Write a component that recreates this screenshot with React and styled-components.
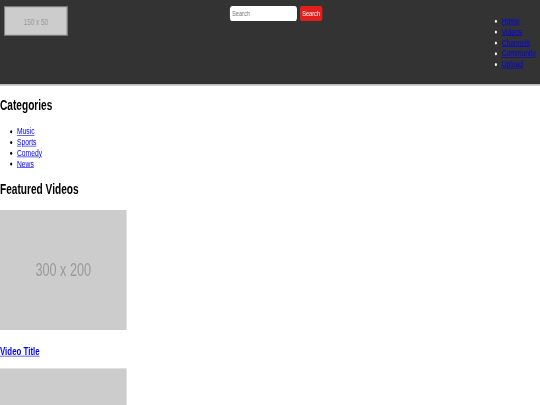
import React from "react";
import styled, { createGlobalStyle } from "styled-components";

const Global = createGlobalStyle`
  html, body { margin: 0; padding: 0; background: #fff; overflow: hidden; }
  body { font-family: "Liberation Sans", Arial, sans-serif; }
`;

/* The reference is a 1280x675 page photographed into 540x405,
   so the whole page is laid out at its natural size and scaled. */
const Page = styled.div`
  width: 1280px;
  transform-origin: 0 0;
  transform: scale(0.421875, 0.6);
`;

const Header = styled.header`
  display: flex;
  justify-content: space-between;
  align-items: flex-start;
  background: #333;
  padding: 10px 10px 8px;
  border-bottom: 2px solid #bbb;
`;

const Logo = styled.div`
  width: 150px;
  height: 50px;
  box-sizing: border-box;
  background: #ccc;
  border: 2px solid #777;
  display: flex;
  align-items: center;
  justify-content: center;
  color: #999;
  font-size: 15px;
`;

const SearchForm = styled.form`
  display: flex;
  gap: 7px;
  margin: 0;
`;

const SearchInput = styled.input`
  width: 159px;
  height: 25px;
  box-sizing: border-box;
  border: none;
  border-radius: 6px;
  padding: 0 5px;
  font-family: "Liberation Sans", Arial, sans-serif;
  font-size: 13.33px;
  background: #fff;
  &::placeholder { color: #777; }
`;

const SearchButton = styled.button`
  width: 53px;
  height: 25px;
  box-sizing: border-box;
  border: none;
  border-radius: 4px;
  padding: 0;
  background: #e0201c;
  color: #fff;
  font-family: "Liberation Sans", Arial, sans-serif;
  font-size: 13.33px;
`;

const NavList = styled.ul`
  margin: 16px 0;
  padding: 0 0 0 40px;
  font-size: 16px;
  color: #fff;
`;

const Link = styled.a`
  color: #0000ee;
  text-decoration: underline;
  white-space: nowrap;
`;

const Main = styled.main`
  padding: 0;
`;

const SectionTitle = styled.h2`
  font-size: 24px;
  font-weight: bold;
  margin: 0.83em 0;
  color: #000;
`;

const CatList = styled.ul`
  margin: 16px 0;
  padding-left: 40px;
  font-size: 16px;
`;

const VideoCard = styled.div``;

const Thumb = styled.div`
  width: 300px;
  height: 200px;
  background: #ccc;
  color: #999;
  font-size: 30px;
  display: flex;
  align-items: center;
  justify-content: center;
`;

const VideoTitle = styled.h3`
  font-size: 18.72px;
  font-weight: bold;
  margin: 25px 0 17px;
`;

const nav = ["Home", "Videos", "Channels", "Community", "Upload"];
const cats = ["Music", "Sports", "Comedy", "News"];

export default function App() {
  return (
    <>
      <Global />
      <Page>
        <Header>
          <Logo>150 x 50</Logo>
          <SearchForm onSubmit={(e) => e.preventDefault()}>
            <SearchInput placeholder="Search" />
            <SearchButton type="submit">Search</SearchButton>
          </SearchForm>
          <NavList>
            {nav.map((n) => (
              <li key={n}><Link href="#">{n}</Link></li>
            ))}
          </NavList>
        </Header>
        <Main>
          <SectionTitle>Categories</SectionTitle>
          <CatList>
            {cats.map((c) => (
              <li key={c}><Link href="#">{c}</Link></li>
            ))}
          </CatList>
          <SectionTitle>Featured Videos</SectionTitle>
          {[0, 1].map((i) => (
            <VideoCard key={i}>
              <Thumb>300 x 200</Thumb>
              <VideoTitle><Link href="#">Video Title</Link></VideoTitle>
            </VideoCard>
          ))}
        </Main>
      </Page>
    </>
  );
}
